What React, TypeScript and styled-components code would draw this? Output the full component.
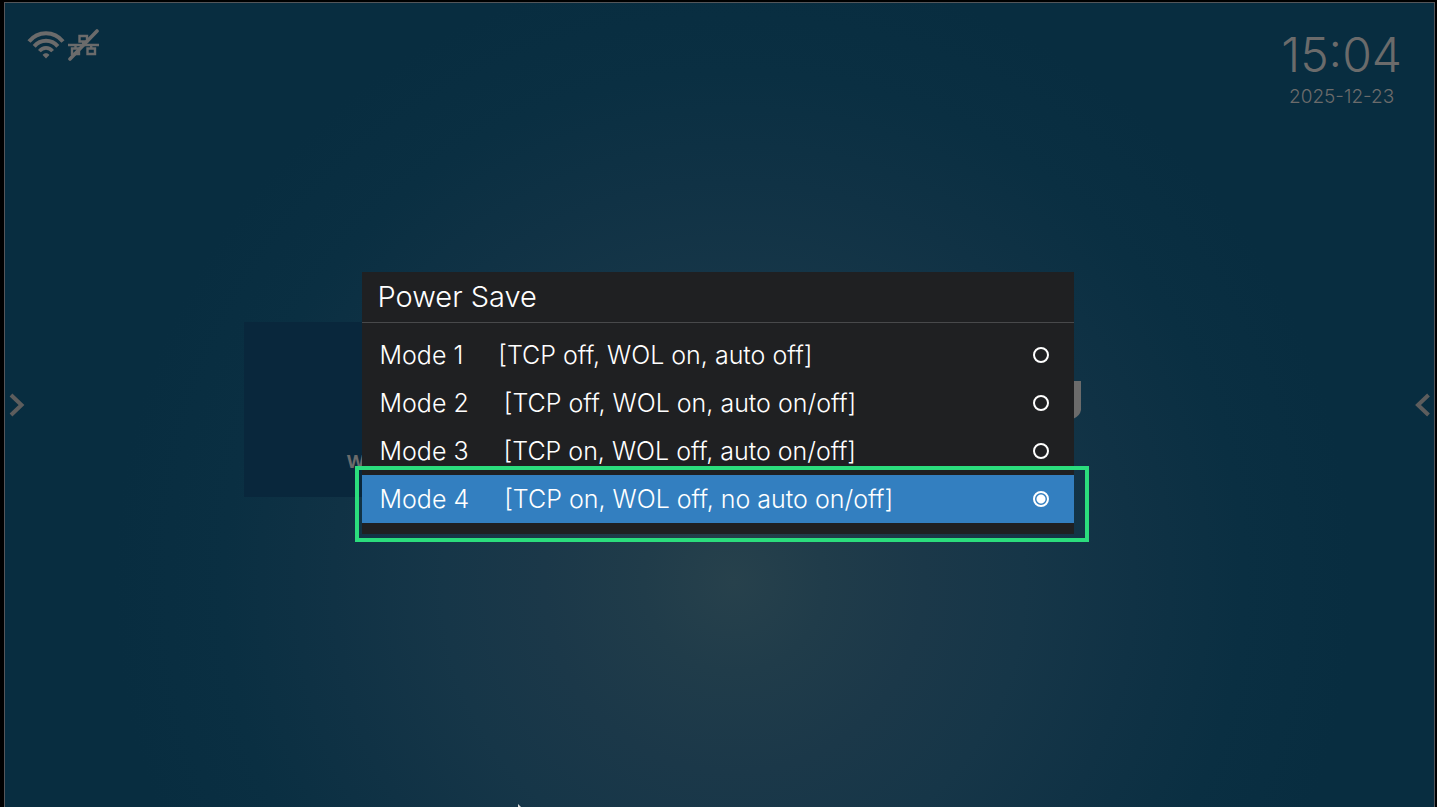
import React, { useState } from "react";
import styled, { createGlobalStyle } from "styled-components";

const GlobalStyle = createGlobalStyle`
  * {
    box-sizing: border-box;
  }
  body {
    margin: 0;
    background: #000;
    color: #fff;
    font-family: Inter, "Noto Sans", sans-serif;
    font-weight: 300;
  }
`;

const Frame = styled.div`
  display: flex;
  min-height: 100vh;
  padding: 2px 2px 0 4px;
  background: #000;
`;

const Screen = styled.div`
  position: relative;
  flex: 1;
  display: grid;
  grid-template-rows: 1fr auto 1fr;
  border: 1px solid #54565a;
  border-bottom: 0;
  color: #6b6b6b;
  background: radial-gradient(
    circle at 51% 72%,
    #27414c 0,
    #203c4a 90px,
    #1b3849 190px,
    #163648 290px,
    #103245 400px,
    #0a2f42 510px,
    #082d40 620px
  );
`;

const TopBar = styled.header`
  display: flex;
  justify-content: space-between;
  align-items: flex-start;
  padding: 24px 32px 0 22px;
`;

const StatusIcons = styled.div`
  display: flex;
  gap: 3px;
`;

const Clock = styled.div`
  display: flex;
  flex-direction: column;
  align-items: center;
`;

const Time = styled.time`
  font-size: 48px;
  line-height: 56px;
`;

const DateText = styled.time`
  font-size: 19px;
  line-height: 28px;
`;

const Home = styled.main`
  display: flex;
  align-items: center;
  justify-content: space-between;
`;

const ArrowButton = styled.button`
  display: flex;
  padding: 0 4px;
  border: 0;
  background: none;
  color: inherit;
`;

const Tiles = styled.div`
  flex: 0 1 952px;
  display: flex;
  justify-content: space-between;
  align-items: center;
  padding: 9px 115px 0 0;
`;

const Tile = styled.section`
  display: flex;
  align-items: flex-end;
  width: 300px;
  height: 175px;
  padding: 0 103px 24px;
  background: #09273c;
  font-size: 18px;
  font-weight: 700;
  line-height: 22px;
`;

const Overlay = styled.div`
  position: absolute;
  inset: 0;
  display: flex;
  align-items: center;
  justify-content: center;
  padding: 0 4px 4px 0;
`;

const Dialog = styled.form`
  width: 712px;
  background: #1f2022;
  color: #fff;
`;

const DialogTitle = styled.h1`
  margin: 0;
  padding: 0 16px;
  border-bottom: 1px solid #48494b;
  font-size: 29px;
  font-weight: 300;
  line-height: 50px;
`;

const ModeList = styled.div`
  padding: 8px 0 11px;
`;

const ModeRow = styled.label<{ $selected: boolean }>`
  position: relative;
  display: flex;
  align-items: center;
  gap: 35px;
  height: 48px;
  padding: 0 25px 0 18px;
  background: ${(p) => (p.$selected ? "#337fc0" : "transparent")};
  font-size: 25px;
  line-height: 48px;
  white-space: nowrap;
`;

const Detail = styled.span`
  flex: 1;
`;

const Radio = styled.input`
  appearance: none;
  width: 16px;
  height: 16px;
  margin: 0;
  border: 2px solid #fff;
  border-radius: 50%;
  background: transparent;

  &:checked {
    background: radial-gradient(circle, #fff 4px, transparent 5px);
  }
`;

const Highlight = styled.span`
  position: absolute;
  inset: -9px -15px -19px -7px;
  border: 4px solid #2bdd7d;
  pointer-events: none;
`;

const Pointer = styled.svg`
  position: absolute;
  left: 513px;
  bottom: 0;
`;

const WifiIcon = () => (
  <svg width="38" height="36" viewBox="0 0 38 36" fill="none" stroke="currentColor" strokeWidth="4" aria-label="Wi-Fi">
    <path d="M2 14.5C11 3.500 27 3.500 36 14.5" />
    <path d="M7.2 19.4C13.5 12 24.5 12 30.8 19.4" />
    <path d="M12.4 24.2C16 19.8 22 19.8 25.6 24.2" strokeWidth="3.6" />
    <path d="M15.6 28C17 25.6 21 25.6 22.4 28L19 31.4Z" fill="currentColor" stroke="none" />
  </svg>
);

const LanOffIcon = () => (
  <svg width="32" height="36" viewBox="0 0 32 36" fill="none" stroke="currentColor" strokeWidth="2.4" aria-label="Network off">
    <path d="M11.5 9h7.5v5.500h-7.5zM4 21.500h7v5.500H4zM19.500 21.500h7.500v5.500h-7.500zM15.200 14.500v3.500M7.500 18v3.500M23.200 18v3.500M0 18h31" />
    <path d="M2 32L29 4" strokeWidth="3.600" strokeLinecap="round" />
  </svg>
);

const Chevron = ({ d }: { d: string }) => (
  <svg width="16" height="24" viewBox="0 0 16 24" fill="none" stroke="#5d5d5d" strokeWidth="4">
    <path d={d} />
  </svg>
);

const modes = [
  { name: "Mode 1", detail: "[TCP off, WOL on, auto off]" },
  { name: "Mode 2", detail: "[TCP off, WOL on, auto on/off]" },
  { name: "Mode 3", detail: "[TCP on, WOL off, auto on/off]" },
  { name: "Mode 4", detail: "[TCP on, WOL off, no auto on/off]" },
];

export default function App() {
  const [selected, setSelected] = useState("Mode 4");

  return (
    <Frame>
      <GlobalStyle />
      <Screen>
        <TopBar>
          <StatusIcons>
            <WifiIcon />
            <LanOffIcon />
          </StatusIcons>
          <Clock>
            <Time>15:04</Time>
            <DateText>2025-12-23</DateText>
          </Clock>
        </TopBar>

        <Home>
          <ArrowButton type="button" aria-label="Open left panel">
            <Chevron d="M2 2L12.500 12L2 22" />
          </ArrowButton>
          <Tiles>
            <Tile>W</Tile>
            <svg width="38" height="60" viewBox="0 0 38 60" aria-hidden="true">
              <path d="M0 1h38v29q-1 6-8 9H0z" fill="#6b6b6b" />
            </svg>
          </Tiles>
          <ArrowButton type="button" aria-label="Open right panel">
            <Chevron d="M14.500 2L4 12L14.500 22" />
          </ArrowButton>
        </Home>

        <Overlay>
          <Dialog role="dialog" aria-labelledby="power-save-title">
            <DialogTitle id="power-save-title">Power Save</DialogTitle>
            <ModeList role="radiogroup" aria-labelledby="power-save-title">
              {modes.map(({ name, detail }) => (
                <ModeRow key={name} $selected={name === selected}>
                  <span>{name}</span>
                  <Detail>{detail}</Detail>
                  <Radio
                    type="radio"
                    name="power-save"
                    value={name}
                    checked={name === selected}
                    onChange={() => setSelected(name)}
                  />
                  {name === selected && <Highlight />}
                </ModeRow>
              ))}
            </ModeList>
          </Dialog>
        </Overlay>

        <Pointer width="4" height="3" viewBox="0 0 4 3" aria-hidden="true">
          <path d="M0 0L3 3H0z" fill="#ddd" />
        </Pointer>
      </Screen>
    </Frame>
  );
}
